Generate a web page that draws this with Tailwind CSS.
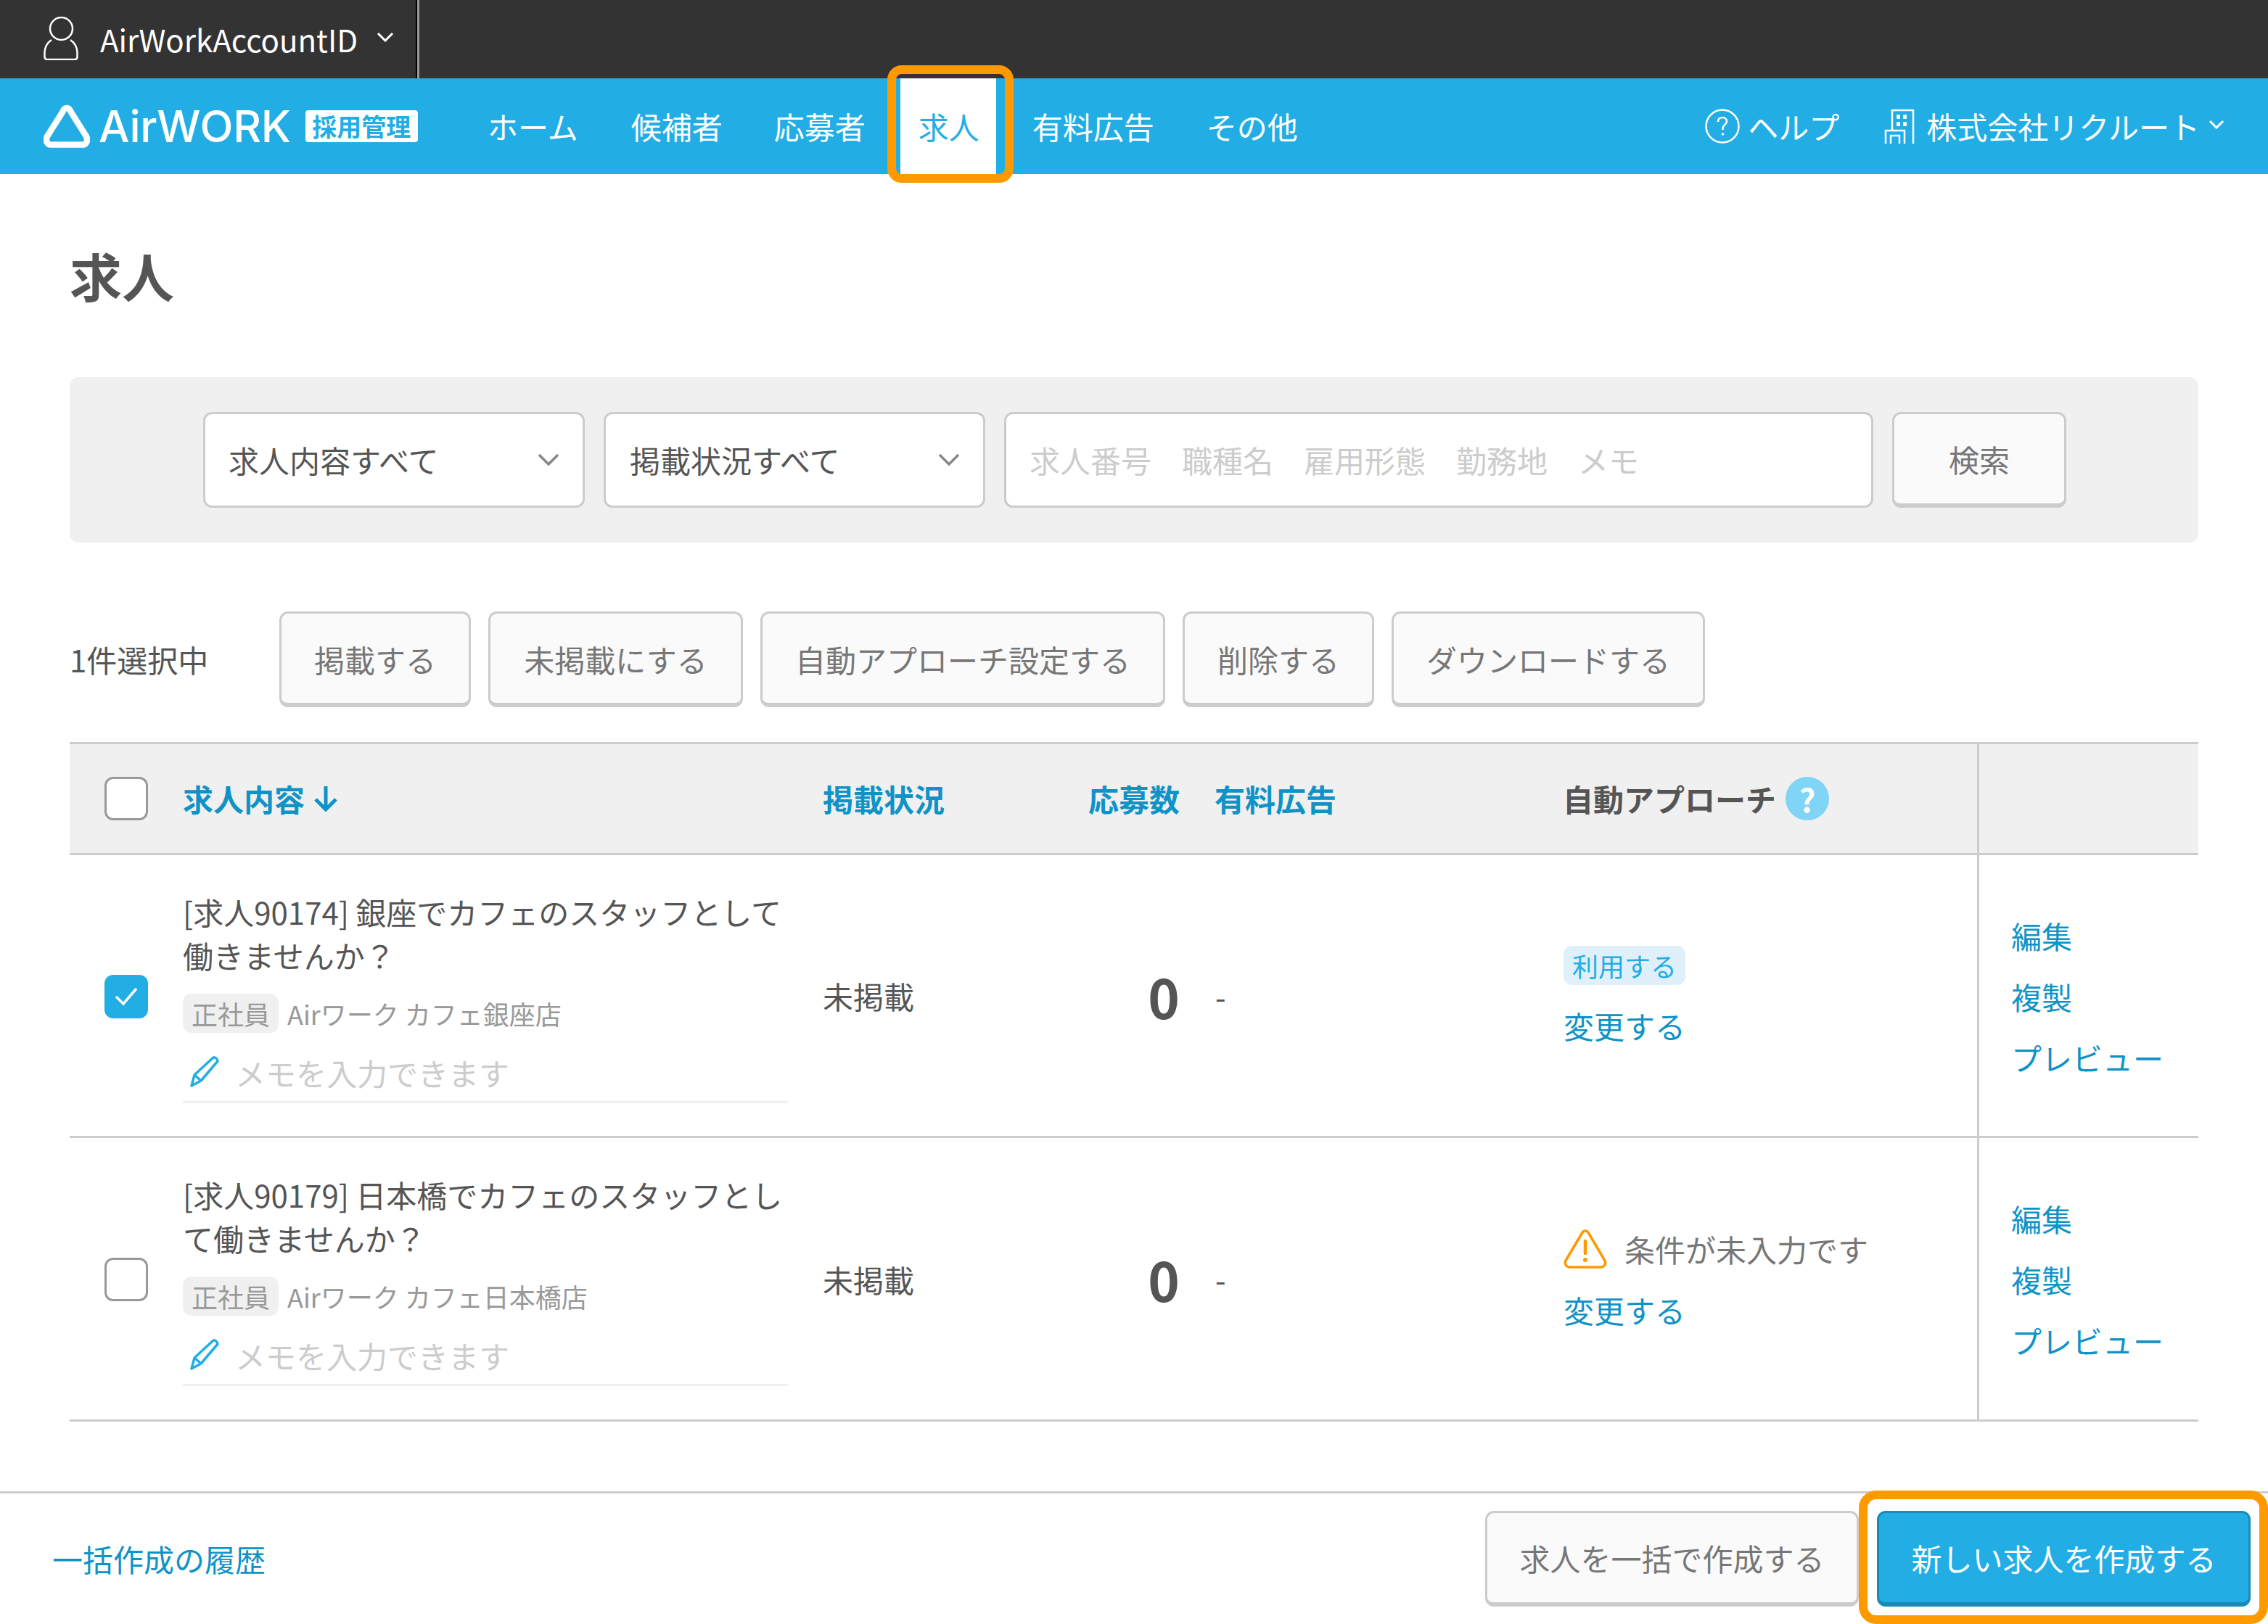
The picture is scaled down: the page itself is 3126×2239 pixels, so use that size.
<!DOCTYPE html>
<html lang="ja">
<head>
<meta charset="utf-8">
<script src="https://cdn.jsdelivr.net/npm/@tailwindcss/browser@4"></script>
</head>
<body class="bg-white font-['Noto_Sans_CJK_JP','Noto_Sans',sans-serif] text-[42px] leading-[60px] text-[#555]">
<div class="w-[3126px] h-[2239px] overflow-hidden flex flex-col">
  <div class="h-[108px] shrink-0 bg-[#333] flex items-stretch">
    <div class="w-[573px] pl-[60px] flex items-center text-white">
      <svg class="w-[48px] h-[60px] mt-[-2px]" viewBox="0 0 48 60" fill="none" stroke="white" stroke-width="2.5"><ellipse cx="24.5" cy="16.5" rx="15.5" ry="15.5"/><path d="M11 32C5 36 1.500 42 1.500 50V55C1.500 57.500 3 59 5 59H43C45 59 46.500 57.500 46.500 55V50C46.500 42 43 36 37 32"/></svg>
      <span class="ml-[30px] leading-none">AirWorkAccountID</span>
      <svg class="w-[24px] h-[14px] ml-[26px] mt-[-6px]" viewBox="0 0 24 14" fill="none" stroke="white" stroke-width="3"><path d="M2 2L12 12L22 2"/></svg>
    </div>
    <div class="w-[5px] bg-[#999] border-l-2 border-black"></div>
  </div>
  <header class="h-[132px] shrink-0 bg-[#22aee5] flex items-center text-white">
    <div class="w-[672px] pl-[60px] flex items-center shrink-0">
      <svg class="w-[64px] h-[60px]" viewBox="0 0 64 60" fill="none" stroke="white" stroke-width="8.500" stroke-linejoin="round"><path d="M32 5C29 5 27.500 7 26.500 10L5 44C2.500 50 5 55.500 10 55.500H54C59 55.500 61.500 50 59 44L37.500 10C36.500 7 35 5 32 5Z"/></svg>
      <span class="ml-[12px] font-['Inter',sans-serif] font-medium text-[60px] leading-none tracking-[-0.3px]">AirWORK</span>
      <span class="ml-[20px] w-[155px] h-[44px] bg-white rounded-[4px] text-[#22aee5] text-[34px] font-bold leading-[44px] text-center">採用管理</span>
    </div>
    <nav class="flex items-center">
      <a class="leading-none">ホーム</a>
      <a class="ml-[73px] leading-none">候補者</a>
      <a class="ml-[71px] leading-none">応募者</a>
      <a class="ml-[73px] leading-none text-[#22aee5] relative z-0">求人<span class="absolute -z-10 left-[-25px] right-[-23px] top-[-45px] bottom-[-45px] bg-white"></span><span class="absolute left-[-43px] right-[-47px] top-[-63px] bottom-[-57px] border-[12px] border-[#ff9900] rounded-[20px]"></span></a>
      <a class="ml-[73px] leading-none">有料広告</a>
      <a class="ml-[72px] leading-none">その他</a>
    </nav>
    <div class="ml-auto pr-[60px] flex items-center">
      <svg class="w-[48px] h-[48px]" viewBox="0 0 48 48" fill="none" stroke="white" stroke-width="2.500"><circle cx="24" cy="24" r="22.500"/><path d="M18 18C18 14 20.500 12 24 12C27.500 12 30 14 30 17.500C30 21 24.500 22.500 24.500 27V29" stroke-width="2.500"/><circle cx="24.500" cy="35" r="1.800" fill="white" stroke="none"/></svg>
      <span class="ml-[11px] leading-none">ヘルプ</span>
      <svg class="ml-[62px] w-[42px] h-[48px]" viewBox="0 0 42 48" fill="none" stroke="white" stroke-width="2.500"><path d="M11 30V2H40V48"/><path d="M2 48V30H28V48"/><path d="M9 48V37H21V48"/><g fill="white" stroke="none"><rect x="17" y="8" width="5" height="6" rx="1"/><rect x="26" y="8" width="5" height="6" rx="1"/><rect x="17" y="18" width="5" height="6" rx="1"/><rect x="26" y="18" width="5" height="6" rx="1"/></g></svg>
      <span class="ml-[16px] leading-none">株式会社リクルート</span>
      <svg class="ml-[12px] w-[22px] h-[13px] mt-[-6px]" viewBox="0 0 22 13" fill="none" stroke="white" stroke-width="3"><path d="M2 2L11 11L20 2"/></svg>
    </div>
  </header>
  <main class="flex-1 px-[96px] flex flex-col">
    <h1 class="mt-[104px] text-[72px] leading-[70px] font-bold text-[#555]">求人</h1>
    <div class="mt-[106px] h-[228px] bg-[#f0f0f0] rounded-[12px] pl-[184px] flex items-center gap-[26px]">
      <div class="w-[526px] h-[132px] bg-white border-[3px] border-[#ccc] rounded-[12px] pl-[32px] pr-[32px] flex items-center justify-between">
        <span>求人内容すべて</span>
        <svg class="w-[30px] h-[18px]" viewBox="0 0 30 18" fill="none" stroke="#888" stroke-width="3.500"><path d="M2 2L15 15L28 2"/></svg>
      </div>
      <div class="w-[526px] h-[132px] bg-white border-[3px] border-[#ccc] rounded-[12px] pl-[33px] pr-[32px] flex items-center justify-between">
        <span>掲載状況すべて</span>
        <svg class="w-[30px] h-[18px]" viewBox="0 0 30 18" fill="none" stroke="#888" stroke-width="3.500"><path d="M2 2L15 15L28 2"/></svg>
      </div>
      <div class="w-[1198px] h-[132px] bg-white border-[3px] border-[#ccc] rounded-[12px] pl-[32px] flex items-center text-[#ccc] gap-[42px]">
        <span>求人番号</span><span>職種名</span><span>雇用形態</span><span>勤務地</span><span>メモ</span>
      </div>
      <div class="w-[240px] h-[132px] bg-[#fafafa] border-[3px] border-b-[6px] border-[#ccc] rounded-[12px] flex items-center justify-center text-[#777]">検索</div>
    </div>
    <div class="mt-[95px] h-[132px] flex items-center text-[#555]">
      <span class="w-[289px]">1件選択中</span>
      <div class="flex gap-[24px] text-[#777]">
        <button class="h-[132px] w-[264px] pt-[3px] bg-[#fafafa] border-[3px] border-b-[6px] border-[#ccc] rounded-[12px]">掲載する</button>
        <button class="h-[132px] w-[351px] pt-[3px] bg-[#fafafa] border-[3px] border-b-[6px] border-[#ccc] rounded-[12px]">未掲載にする</button>
        <button class="h-[132px] w-[558px] pt-[3px] bg-[#fafafa] border-[3px] border-b-[6px] border-[#ccc] rounded-[12px]">自動アプローチ設定する</button>
        <button class="h-[132px] w-[264px] pt-[3px] bg-[#fafafa] border-[3px] border-b-[6px] border-[#ccc] rounded-[12px]">削除する</button>
        <button class="h-[132px] w-[432px] pt-[3px] bg-[#fafafa] border-[3px] border-b-[6px] border-[#ccc] rounded-[12px]">ダウンロードする</button>
      </div>
    </div>
    <div class="mt-[48px] grid grid-cols-[156px_882px_300px_192px_528px_571px_305px] border-t-[3px] border-[#ccc]">
      <!-- header -->
      <div class="h-[153px] bg-[#f0f0f0] border-b-[3px] border-[#ccc] pl-[48px] flex items-center"><span class="block w-[60px] h-[60px] bg-white border-[3px] border-[#999] rounded-[12px]"></span></div>
      <div class="h-[153px] bg-[#f0f0f0] border-b-[3px] border-[#ccc] flex items-center font-bold text-[#0f93c7]">求人内容<svg class="ml-[12px] w-[34px] h-[36px]" viewBox="0 0 34 36" fill="none" stroke="#0f93c7" stroke-width="5"><path d="M17 1V33M3 19L17 33L31 19"/></svg></div>
      <div class="h-[153px] bg-[#f0f0f0] border-b-[3px] border-[#ccc] flex items-center font-bold text-[#0f93c7]">掲載状況</div>
      <div class="h-[153px] bg-[#f0f0f0] border-b-[3px] border-[#ccc] flex items-center justify-end font-bold text-[#0f93c7]">応募数</div>
      <div class="h-[153px] bg-[#f0f0f0] border-b-[3px] border-[#ccc] flex items-center pl-[48px] font-bold text-[#0f93c7]">有料広告</div>
      <div class="h-[153px] bg-[#f0f0f0] border-b-[3px] border-[#ccc] flex items-center font-bold text-[#555]">自動アプローチ<span class="ml-[13px] w-[60px] h-[60px] rounded-full bg-[#80d4f6] text-white text-[44px] leading-[60px] text-center">?</span></div>
      <div class="h-[153px] bg-[#f0f0f0] border-b-[3px] border-l-[3px] border-[#ccc]"></div>
      <!-- row 1 -->
      <div class="h-[390px] border-b-[3px] border-[#ccc] pl-[48px] pt-[2px] flex items-center">
        <span class="w-[60px] h-[60px] bg-[#22aee5] rounded-[12px] flex items-center justify-center"><svg class="w-[34px] h-[28px]" viewBox="0 0 34 28" fill="none" stroke="white" stroke-width="3.500"><path d="M3 14L13 24L31 3"/></svg></span>
      </div>
      <div class="h-[390px] border-b-[3px] border-[#ccc] pt-[48px]">
        <p class="w-[834px]">[求人90174] 銀座でカフェのスタッフとして働きませんか？</p>
        <div class="mt-[23px] flex items-center text-[36px] text-[#999] leading-[54px]"><span class="h-[54px] bg-[#f0f0f0] rounded-[12px] px-[12px]">正社員</span><span class="ml-[12px]">Airワーク カフェ銀座店</span></div>
        <div class="mt-[16px] w-[834px] h-[81px] border-b-[3px] border-[#f0f0f0] flex items-center text-[#ccc] pl-[8px]">
          <svg class="w-[44px] h-[44px] shrink-0 mb-[4px]" viewBox="0 0 44 44" fill="none" stroke="#22aee5" stroke-width="3.500" stroke-linejoin="round"><path d="M34 3C36 2 40 5 40 8L17 35L4 42L8 27Z"/><path d="M8 27L17 35"/></svg>
          <span class="ml-[20px]">メモを入力できます</span>
        </div>
      </div>
      <div class="h-[390px] border-b-[3px] border-[#ccc] pt-[1px] flex items-center">未掲載</div>
      <div class="h-[390px] border-b-[3px] border-[#ccc] flex items-center justify-end font-bold text-[74px]">0</div>
      <div class="h-[390px] border-b-[3px] border-[#ccc] flex items-center pl-[49px]">-</div>
      <div class="h-[390px] border-b-[3px] border-[#ccc] pt-[125px] pl-[1px]">
        <span class="block w-fit h-[54px] px-[12px] bg-[#e0f0fa] rounded-[12px] text-[36px] leading-[54px] text-[#22aee5]">利用する</span>
        <a class="block mt-[26px] text-[#0f93c7]">変更する</a>
      </div>
      <div class="h-[390px] border-b-[3px] border-l-[3px] border-[#ccc] pl-[44px] pt-[2px] flex flex-col justify-center gap-[24px] text-[#0f93c7]"><a>編集</a><a>複製</a><a>プレビュー</a></div>
      <!-- row 2 -->
      <div class="h-[391px] border-b-[3px] border-[#ccc] pl-[48px] pt-[2px] flex items-center">
        <span class="block w-[60px] h-[60px] bg-white border-[3px] border-[#999] rounded-[12px]"></span>
      </div>
      <div class="h-[391px] border-b-[3px] border-[#ccc] pt-[48px]">
        <p class="w-[834px]">[求人90179] 日本橋でカフェのスタッフとして働きませんか？</p>
        <div class="mt-[23px] flex items-center text-[36px] text-[#999] leading-[54px]"><span class="h-[54px] bg-[#f0f0f0] rounded-[12px] px-[12px]">正社員</span><span class="ml-[12px]">Airワーク カフェ日本橋店</span></div>
        <div class="mt-[16px] w-[834px] h-[81px] border-b-[3px] border-[#f0f0f0] flex items-center text-[#ccc] pl-[8px]">
          <svg class="w-[44px] h-[44px] shrink-0 mb-[4px]" viewBox="0 0 44 44" fill="none" stroke="#22aee5" stroke-width="3.500" stroke-linejoin="round"><path d="M34 3C36 2 40 5 40 8L17 35L4 42L8 27Z"/><path d="M8 27L17 35"/></svg>
          <span class="ml-[20px]">メモを入力できます</span>
        </div>
      </div>
      <div class="h-[391px] border-b-[3px] border-[#ccc] pt-[1px] flex items-center">未掲載</div>
      <div class="h-[391px] border-b-[3px] border-[#ccc] flex items-center justify-end font-bold text-[74px]">0</div>
      <div class="h-[391px] border-b-[3px] border-[#ccc] flex items-center pl-[49px]">-</div>
      <div class="h-[391px] border-b-[3px] border-[#ccc] pt-[125px] pl-[1px]">
        <div class="flex items-center h-[56px] text-[#777]"><svg class="w-[60px] h-[56px]" viewBox="0 0 60 56" fill="none" stroke="#ff9900" stroke-width="3.500" stroke-linejoin="round"><path d="M30 3C28 3 26.500 4 25.500 6L3 44C1 49 4 53 9 53H51C56 53 59 49 57 44L34.500 6C33.500 4 32 3 30 3Z"/><path d="M30 17V34" stroke-width="4.500" stroke-linecap="round"/><circle cx="30" cy="43" r="3" fill="#ff9900" stroke="none"/></svg><span class="ml-[24px]">条件が未入力です</span></div>
        <a class="block mt-[26px] text-[#0f93c7]">変更する</a>
      </div>
      <div class="h-[391px] border-b-[3px] border-l-[3px] border-[#ccc] pl-[44px] pt-[2px] flex flex-col justify-center gap-[24px] text-[#0f93c7]"><a>編集</a><a>複製</a><a>プレビュー</a></div>
    </div>
  </main>
  <footer class="h-[183px] shrink-0 border-t-[3px] border-[#ccc] pl-[72px] pr-[24px] flex items-center justify-between">
    <a class="text-[#0f93c7]">一括作成の履歴</a>
    <div class="flex items-center gap-[25px]">
      <button class="w-[515px] h-[132px] bg-[#fafafa] border-[3px] border-b-[6px] border-[#ccc] rounded-[12px] text-[#777]">求人を一括で作成する</button>
      <div class="relative">
        <span class="absolute left-[-25px] right-[-24px] top-[-28px] bottom-[-24px] border-[12px] border-[#ff9900] rounded-[24px]"></span>
        <button class="relative block w-[515px] h-[132px] bg-[#22aee5] border-t-[3px] border-x-[3px] border-b-[6px] border-[#1a8ab8] rounded-[12px] text-white">新しい求人を作成する</button>
      </div>
    </div>
  </footer>
</div>
</body>
</html>
